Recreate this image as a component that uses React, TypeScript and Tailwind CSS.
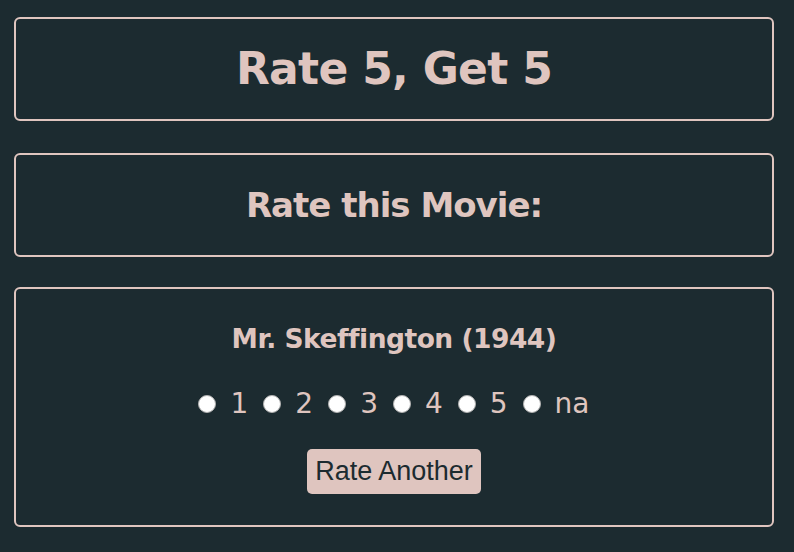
import { useState } from "react";

const options = ["1", "2", "3", "4", "5", "na"];

export default function App() {
    const [rating, setRating] = useState<string | null>(null);

    return (
        <div
            className="min-h-[552px] w-full bg-[#1c2b30] pt-[17px] text-[#dfc5bf]"
            style={{ fontFamily: "Tahoma, 'DejaVu Sans', sans-serif" }}
        >
            <div className="ml-[14px] flex w-[760px] flex-col">
                {/* Header */}
                <div className="flex h-[104px] items-center justify-center rounded-md border-2 border-[#dfc5bf]">
                    <h1 className="text-[44px] font-bold tracking-[-0.7px]">Rate 5, Get 5</h1>
                </div>

                <div className="mt-[32px] flex h-[104px] items-center justify-center rounded-md border-2 border-[#dfc5bf]">
                    <h2 className="text-[34px] font-bold tracking-[-1px]">Rate this Movie:</h2>
                </div>

                {/* Movie card */}
                <div className="mt-[30px] flex h-[240px] flex-col items-center rounded-md border-2 border-[#dfc5bf] pt-[30px]">
                    <h3 className="text-[26.5px] font-bold leading-[40px] tracking-[-0.5px]">Mr. Skeffington (1944)</h3>

                    <div className="mt-[27px] flex h-[36px] items-center gap-[15px]">
                        {options.map((opt) => (
                            <label key={opt} className="flex cursor-pointer items-center gap-[14px]">
                                <input
                                    type="radio"
                                    name="rating"
                                    checked={rating === opt}
                                    onChange={() => setRating(opt)}
                                    className="h-[18px] w-[18px] appearance-none rounded-full border border-[#b0b0b0] bg-white checked:border-[5px] checked:border-[#1a73e8]"
                                />
                                <span className="text-[28px] leading-none">{opt}</span>
                            </label>
                        ))}
                    </div>

                    <button
                        className="mt-[27px] h-[45px] w-[174px] rounded-[5px] bg-[#dfc5bf] text-[27px] text-[#1c2b30]"
                        style={{ fontFamily: "'Liberation Sans', Arial, sans-serif" }}
                    >
                        Rate Another
                    </button>
                </div>
            </div>
        </div>
    );
}
